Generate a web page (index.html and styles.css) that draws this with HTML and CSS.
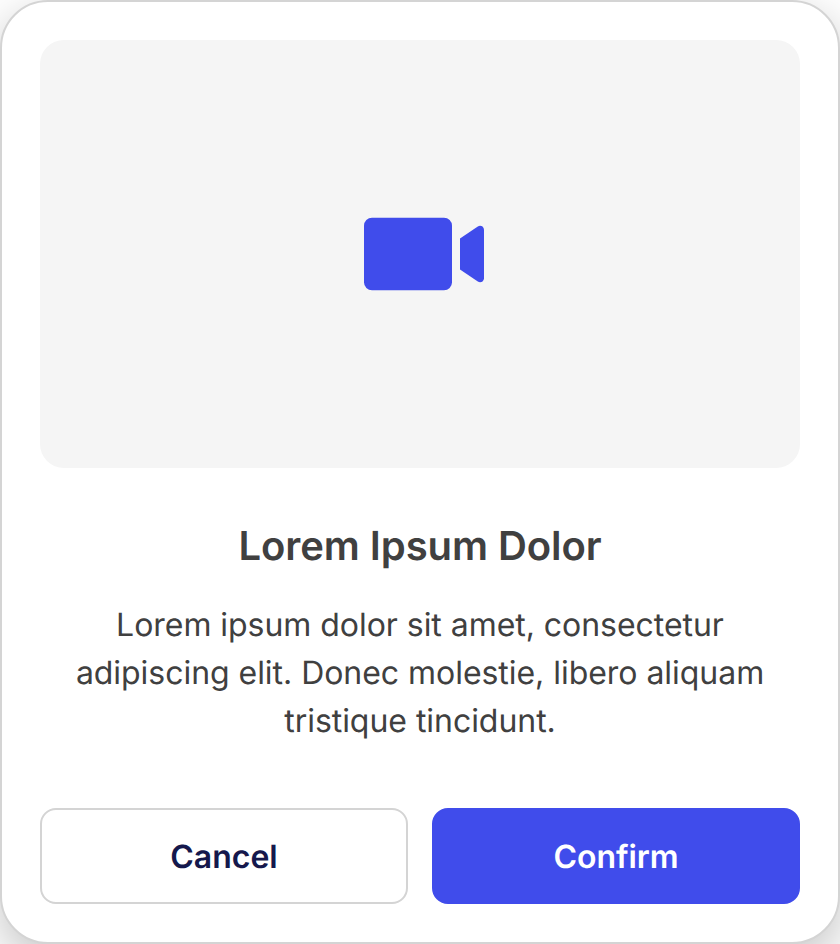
FILE: index.html
```html
<!DOCTYPE html>
<html lang="en">
<head>
<meta charset="utf-8">
<title>Dialog</title>
<link rel="stylesheet" href="styles.css">
</head>
<body>
<main class="dialog">
  <div class="media">
    <svg class="video-icon" width="120" height="74" viewBox="0 0 120 74" aria-hidden="true">
      <rect x="0" y="0.75" width="88" height="72.500" rx="8"/>
      <path d="M96 21.500L113.800 9.500C116.500 7.700 120 9.600 120 12.800V61.200C120 64.400 116.500 66.300 113.800 64.500L96 52.500Z"/>
    </svg>
  </div>
  <h1 class="title">Lorem Ipsum Dolor</h1>
  <p class="description">Lorem ipsum dolor sit amet, consectetur adipiscing elit. Donec molestie, libero aliquam tristique tincidunt.</p>
  <div class="actions">
    <button class="button button-cancel">Cancel</button>
    <button class="button button-confirm">Confirm</button>
  </div>
</main>
</body>
</html>
```
FILE: styles.css
```css
* { box-sizing: border-box; }
body {
  margin: 0;
  background: #fff;
  font-family: Inter, sans-serif;
  text-rendering: geometricPrecision;
  -webkit-font-smoothing: antialiased;
  overflow: hidden;
}
.dialog {
  width: 840px;
  height: 944px;
  padding: 38px;
  border: 2px solid #d4d4d4;
  border-radius: 48px;
  background: #fff;
  box-shadow: 0 16px 48px rgba(0, 0, 0, 0.24);
}
.media {
  display: flex;
  align-items: center;
  justify-content: center;
  height: 428px;
  padding-left: 8px;
  border-radius: 24px;
  background: #f5f5f5;
}
.video-icon { fill: #404ceb; }
.title {
  margin: 48px 0 0;
  color: #404040;
  font-size: 40px;
  font-weight: 600;
  line-height: 60px;
  letter-spacing: -0.06px;
  text-align: center;
}
.description {
  margin: 25px 0 0;
  padding: 0 32px;
  color: #404040;
  font-size: 32px;
  line-height: 48px;
  letter-spacing: -0.04px;
  text-align: center;
}
.actions {
  display: grid;
  grid-template-columns: 1fr 1fr;
  gap: 24px;
  margin-top: 63px;
}
.button {
  height: 96px;
  padding: 2px 0 0;
  border: 2px solid #d4d4d4;
  border-radius: 16px;
  background: #fff;
  color: #15184c;
  font: 600 32px/48px Inter, sans-serif;
  text-rendering: geometricPrecision;
}
.button-confirm {
  border-color: #404ceb;
  background: #404ceb;
  color: #fff;
  letter-spacing: -0.1px;
}
```
